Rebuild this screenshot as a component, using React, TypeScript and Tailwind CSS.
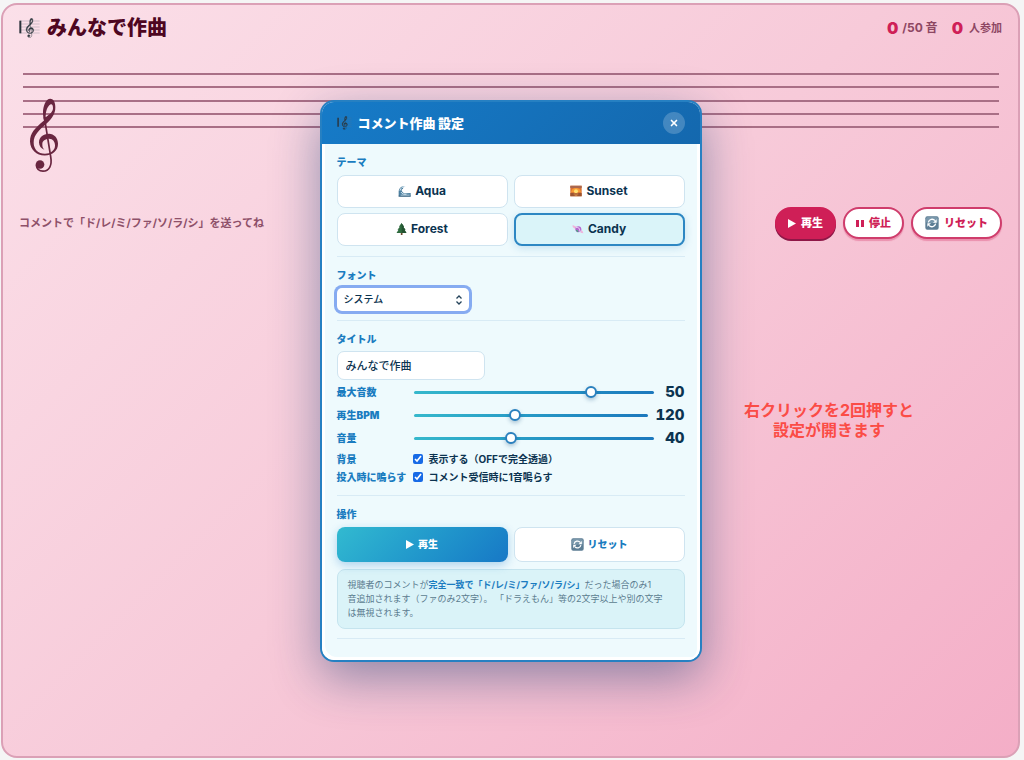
import React, { useState } from 'react';
import { X } from 'lucide-react';

interface SliderRowProps {
  id: string;
  label: string;
  min: number;
  max: number;
  value: number;
  onChange: (value: number) => void;
}

interface CheckRowProps {
  id: string;
  label: string;
  text: string;
}

const ClefShape = () => (
  <>
    <path
      fillRule="evenodd"
      fill="currentColor"
      d="M133 362C105 386 91 400 91 425C92 450 110 467 135 467C160 467 175 452 175 432C175 415 163 402 148 402C130 402 118 413 118 428C118 438 124 446 134 450C128 444 128 440 128 432C128 424 137 417 148 417C160 417 166 427 166 438C166 452 152 462 136 462C115 462 102 448 102 428C102 405 120 390 140 372C158 354 167 342 167 322C167 305 160 297 152 297C138 297 130 320 130 338C130 345 131 355 133 362ZM160 325C160 316 157 311 152 314C143 320 138 333 138 352C152 342 160 334 160 325Z"
    />
    <path
      d="M134 352L153 470C158 498 148 514 130 514C118 514 111 506 110 496"
      fill="none"
      stroke="currentColor"
      strokeWidth="5"
    />
    <circle cx="121" cy="494" r="13" fill="currentColor" />
  </>
);

const TrebleClef = ({ className }: { className: string }) => (
  <svg viewBox="88 295 90 224" className={className} aria-hidden="true">
    <ClefShape />
  </svg>
);

const ScoreIcon = ({ className }: { className: string }) => (
  <svg viewBox="0 0 63 60" className={`${className} text-[#2f3a40]`} aria-hidden="true">
    <path d="M4 9H62M4 18H62M4 27H62M4 36H62M4 45H62" stroke="#6b7280" strokeOpacity="0.45" strokeWidth="2" />
    <path d="M4 8V46" stroke="#2b333b" strokeWidth="6" />
    <g transform="translate(-3 -79) scale(0.268)" stroke="currentColor" strokeWidth="4">
      <ClefShape />
    </g>
  </svg>
);

const WaveIcon = () => (
  <svg viewBox="0 0 40 36" className="h-3 w-[13px]" aria-hidden="true">
    <path d="M2 34V18C4 7 12 2 22 4c-6 1-8 4-6 8-4-1-6 2-4 6 2 6 8 8 14 7l13-1v10z" fill="#4d7f9f" />
    <path d="M6 17C8 8 14 5 22 4M9 21c4 8 12 7 17 7M8 31h28" fill="none" stroke="#dcecf5" strokeWidth="3" />
    <path d="M2 34h37" stroke="#2d5878" strokeWidth="3" />
  </svg>
);

const SunsetIcon = () => (
  <svg viewBox="0 0 36 36" className="h-3 w-3" aria-hidden="true">
    <path d="M1 2h34v32H1z" fill="#d9702f" />
    <path d="M1 2h34v7H1z" fill="#a9674f" />
    <path d="M3 22a15 13 0 0 1 30 0z" fill="#f79a35" />
    <circle cx="18" cy="19" r="6" fill="#ffe070" />
    <path d="M1 24h34v10H1z" fill="#9a5433" />
    <path d="M11 27h14M14 31h8" stroke="#f2a04b" strokeWidth="2" />
  </svg>
);

const TreeIcon = () => (
  <svg viewBox="0 0 32 36" className="h-3 w-[11px]" aria-hidden="true">
    <path d="M14 28h5v8h-5z" fill="#6b4a2d" />
    <path d="M16 0l8 11h-3l7 9h-3l6 10H1l6-10H4l7-9H8z" fill="#2f6b3f" />
    <path d="M16 0l8 11h-3l7 9h-3l6 10H17z" fill="#235331" />
  </svg>
);

const CandyIcon = () => (
  <svg viewBox="0 0 36 36" className="h-3 w-3" aria-hidden="true">
    <path d="M2 6l11 5-3 7-8-6zM34 31l-9-2 3-8 4 4z" fill="#efb4dc" />
    <circle cx="19" cy="19" r="9" fill="#b568cf" />
    <path d="M12 14c6-3 11 1 12 12" fill="none" stroke="#f3e3fa" strokeWidth="3" />
    <path d="M12 22c3 0 5 2 6 5" fill="none" stroke="#4aa582" strokeWidth="4" />
  </svg>
);

const ResetIcon = ({ className }: { className: string }) => (
  <svg viewBox="0 0 42 42" className={className} aria-hidden="true">
    <rect x="1" y="1" width="40" height="40" rx="6" fill="#5d7d94" />
    <rect x="3" y="3" width="36" height="18" rx="5" fill="#7997ab" />
    <g fill="none" stroke="#fff" strokeWidth="4">
      <path d="M10 19a11.5 11.5 0 0 1 20-5" />
      <path d="M32 23a11.5 11.5 0 0 1-20 5" />
    </g>
    <path d="M35 10v10H24zM7 32V22h11z" fill="#fff" />
  </svg>
);

const PlayIcon = () => (
  <svg viewBox="0 0 9 10" className="h-[9px] w-2" aria-hidden="true">
    <path d="M0 0l9 5-9 5z" fill="currentColor" />
  </svg>
);

const PauseIcon = () => (
  <svg viewBox="0 0 8 7" className="h-[7px] w-2" aria-hidden="true">
    <path d="M0 0h3v7H0zM5 0h3v7H5z" fill="currentColor" />
  </svg>
);

const themes = [
  { name: 'Aqua', icon: WaveIcon },
  { name: 'Sunset', icon: SunsetIcon },
  { name: 'Forest', icon: TreeIcon },
  { name: 'Candy', icon: CandyIcon }
];

const labelClass = 'text-[10px] leading-[14px] font-black text-[#1a7cc0]';
const sectionClass = 'border-b border-[#d8ebf5] pt-[11px] pb-[9px]';

const SliderRow: React.FC<SliderRowProps> = ({ id, label, min, max, value, onChange }) => (
  <div className="flex h-[23px] items-center gap-[7px]">
    <label htmlFor={id} className={`${labelClass} w-[70px] shrink-0`}>{label}</label>
    <input
      id={id}
      type="range"
      min={min}
      max={max}
      value={value}
      onChange={(e) => onChange(Number(e.target.value))}
      className="h-[3px] min-w-0 flex-1 appearance-none rounded-full bg-linear-to-r from-[#35b8cc] to-[#1c78bd] [&::-webkit-slider-thumb]:h-3 [&::-webkit-slider-thumb]:w-3 [&::-webkit-slider-thumb]:appearance-none [&::-webkit-slider-thumb]:rounded-full [&::-webkit-slider-thumb]:border-2 [&::-webkit-slider-thumb]:border-solid [&::-webkit-slider-thumb]:border-[#2a80be] [&::-webkit-slider-thumb]:bg-white [&::-webkit-slider-thumb]:shadow-[0_2px_4px_rgba(10,70,120,0.3)]"
    />
    <output htmlFor={id} className="min-w-6 text-right text-[15px] leading-5 font-extrabold text-[#0b3350] tabular-nums">
      {value}
    </output>
  </div>
);

const CheckRow: React.FC<CheckRowProps> = ({ id, label, text }) => (
  <div className="flex h-[18px] items-center gap-[6px]">
    <span className={`${labelClass} w-[70px] shrink-0`}>{label}</span>
    <input id={id} type="checkbox" defaultChecked className="h-[10px] w-[10px] accent-[#176ae6]" />
    <label htmlFor={id} className="text-[10px] leading-[14px] font-bold text-[#0b3350]">{text}</label>
  </div>
);

const SettingsDialog = () => {
  const [theme, setTheme] = useState('Candy');
  const [title, setTitle] = useState('みんなで作曲');
  const [maxNotes, setMaxNotes] = useState(50);
  const [bpm, setBpm] = useState(120);
  const [volume, setVolume] = useState(40);

  return (
    <div
      role="dialog"
      aria-labelledby="settings-title"
      className="w-[382px] overflow-hidden rounded-[14px] border-2 border-[#2680c2] bg-[#eefafd] shadow-[0_16px_48px_rgba(20,60,110,0.45)]"
    >
      <header className="flex h-[42px] items-center bg-linear-135 from-[#167bc8] to-[#1468ae] px-[15px] text-white">
        <ScoreIcon className="h-[14px] w-[15px]" />
        <h2 id="settings-title" className="ml-[6px] flex-1 text-[13px] leading-5 font-black">コメント作曲 設定</h2>
        <button
          type="button"
          aria-label="閉じる"
          className="flex h-[22px] w-[22px] items-center justify-center rounded-full bg-white/20"
        >
          <X className="h-[10px] w-[10px]" strokeWidth={4} />
        </button>
      </header>

      <div className="rounded-b-xl px-[15px] pb-[21px] shadow-[inset_3px_-3px_0_#fff,inset_-3px_0_0_#fff]">
        <section className={sectionClass}>
          <h3 className={labelClass}>テーマ</h3>
          <div className="mt-[6px] mb-px grid grid-cols-2 gap-x-[6px] gap-y-[5px]">
            {themes.map(({ name, icon: IconComponent }) => (
              <button
                key={name}
                type="button"
                aria-pressed={theme === name}
                onClick={() => setTheme(name)}
                className={`flex h-[33px] items-center justify-center gap-1 rounded-lg text-xs font-bold text-[#0b3350] ${
                  theme === name
                    ? 'border-2 border-[#2d87c3] bg-[#daf4f9] shadow-[0_2px_8px_rgba(26,124,192,0.2)]'
                    : 'border border-[#cfe4f0] bg-white'
                }`}
              >
                <IconComponent />
                {name}
              </button>
            ))}
          </div>
        </section>

        <section className={sectionClass}>
          <label htmlFor="font" className={`${labelClass} block`}>フォント</label>
          <div className="relative mt-[6px] w-[132px]">
            <select
              id="font"
              className="block h-[23px] w-full appearance-none rounded-[5px] bg-white px-[7px] text-[10px] font-medium text-[#0b3350] ring-3 ring-[#86abf1] outline-none"
            >
              <option>システム</option>
              <option>ゴシック</option>
            </select>
            <svg viewBox="0 0 8 10" className="pointer-events-none absolute top-[7px] right-[6px] h-[10px] w-2" aria-hidden="true">
              <path d="M1.5 3.5L4 1l2.5 2.5M1.5 6.5L4 9l2.5-2.5" fill="none" stroke="#24435a" strokeWidth="1.3" />
            </svg>
          </div>
        </section>

        <section className={sectionClass}>
          <label htmlFor="title" className={`${labelClass} block`}>タイトル</label>
          <input
            id="title"
            type="text"
            value={title}
            onChange={(e) => setTitle(e.target.value)}
            className="mt-[5px] mb-px block h-[29px] w-[148px] rounded-[7px] border border-[#cfe4f0] bg-white px-2 text-[11px] font-medium text-[#0b3350]"
          />
          <SliderRow id="max-notes" label="最大音数" min={8} max={64} value={maxNotes} onChange={setMaxNotes} />
          <SliderRow id="bpm" label="再生BPM" min={60} max={200} value={bpm} onChange={setBpm} />
          <SliderRow id="volume" label="音量" min={0} max={100} value={volume} onChange={setVolume} />
          <CheckRow id="show-bg" label="背景" text="表示する（OFFで完全透過）" />
          <CheckRow id="play-on-post" label="投入時に鳴らす" text="コメント受信時に1音鳴らす" />
        </section>

        <section className={sectionClass}>
          <h3 className={labelClass}>操作</h3>
          <div className="mt-[6px] grid grid-cols-2 gap-[6px] text-[10px] font-black">
            <button
              type="button"
              className="flex h-[35px] items-center justify-center gap-1 rounded-lg bg-linear-135 from-[#32bad0] to-[#1878c6] text-white shadow-[0_3px_10px_rgba(24,120,198,0.3)]"
            >
              <PlayIcon />
              再生
            </button>
            <button
              type="button"
              className="flex h-[35px] items-center justify-center gap-1 rounded-lg border border-[#cfe4f0] bg-white text-[#1a7cc0]"
            >
              <ResetIcon className="h-[13px] w-[13px]" />
              リセット
            </button>
          </div>
          <p className="mt-[7px] rounded-lg border border-[#c5e4ee] bg-[#daf3f8] px-[10px] py-2 text-[9px] leading-[14px] whitespace-nowrap text-[#5b7c8f]">
            視聴者のコメントが
            <strong className="font-bold text-[#1a7cc0]">完全一致で「ド/レ/ミ/ファ/ソ/ラ/シ」</strong>
            だった場合のみ1
            <br />
            音追加されます（ファのみ2文字）。 「ドラえもん」等の2文字以上や別の文字
            <br />
            は無視されます。
          </p>
        </section>
      </div>
    </div>
  );
};

const App: React.FC = () => {
  const pillClass = 'flex h-8 items-center rounded-full border-2 text-[11px] font-black';

  return (
    <div className="flex min-h-screen bg-[#f5f5f5] pt-[3px] pr-1 pb-[2px] pl-px font-[Inter,'Noto_Sans_CJK_JP',sans-serif]">
      <main className="relative flex flex-1 flex-col rounded-2xl border-2 border-[#dba0b6] bg-linear-135 from-[#fbe0e9] via-[#f7cad9] to-[#f4aec7] px-4 pt-[10px]">
        <header className="flex h-[26px] items-center">
          <ScoreIcon className="h-5 w-[21px]" />
          <h1 className="ml-[7px] flex-1 text-[20px] leading-6 font-black text-[#4e0621]">みんなで作曲</h1>
          <p className="flex items-center gap-1 text-[11px] font-bold text-[#8e4763]">
            <strong className="text-base font-black text-[#cf1f57]">0</strong>
            <span className="text-xs">/50 音</span>
            <strong className="ml-[10px] text-base font-black text-[#cf1f57]">0</strong>
            <span className="ml-[2px]">人参加</span>
          </p>
        </header>

        <div className="relative mt-8 mr-[3px] ml-1 flex h-[55px] flex-col justify-between">
          {[0, 1, 2, 3, 4].map((line) => (
            <div key={line} className="h-[2px] bg-[#a96f86]" />
          ))}
          <TrebleClef className="absolute top-[25px] left-[6px] h-[75px] w-[30px] text-[#692640]" />
        </div>

        <div className="mt-[79px] flex h-8 items-center gap-[7px]">
          <p className="flex-1 text-[11px] font-bold text-[#8e5069]">コメントで「ド/レ/ミ/ファ/ソ/ラ/シ」を送ってね</p>
          <button type="button" className={`${pillClass} gap-[5px] border-[#cf1f57] bg-[#cf1f57] px-[11px] text-white shadow-[0_2px_0_#8f1747]`}>
            <PlayIcon />
            再生
          </button>
          <button type="button" className={`${pillClass} gap-[5px] border-[#cf3d6c] bg-white px-[11px] text-[#cf1f57] shadow-[0_2px_1px_rgba(207,31,87,0.3)]`}>
            <PauseIcon />
            停止
          </button>
          <button type="button" className={`${pillClass} gap-[5px] border-[#cf3d6c] bg-white px-3 text-[#cf1f57] shadow-[0_2px_1px_rgba(207,31,87,0.3)]`}>
            <ResetIcon className="h-[14px] w-[14px]" />
            リセット
          </button>
        </div>

        <p className="mt-[161px] mr-[88px] self-end text-center text-base leading-5 font-bold text-[#fb4c46]">
          右クリックを2回押すと
          <br />
          設定が開きます
        </p>

        <div className="absolute inset-0 flex items-center justify-center">
          <SettingsDialog />
        </div>
      </main>
    </div>
  );
};

export default App;
